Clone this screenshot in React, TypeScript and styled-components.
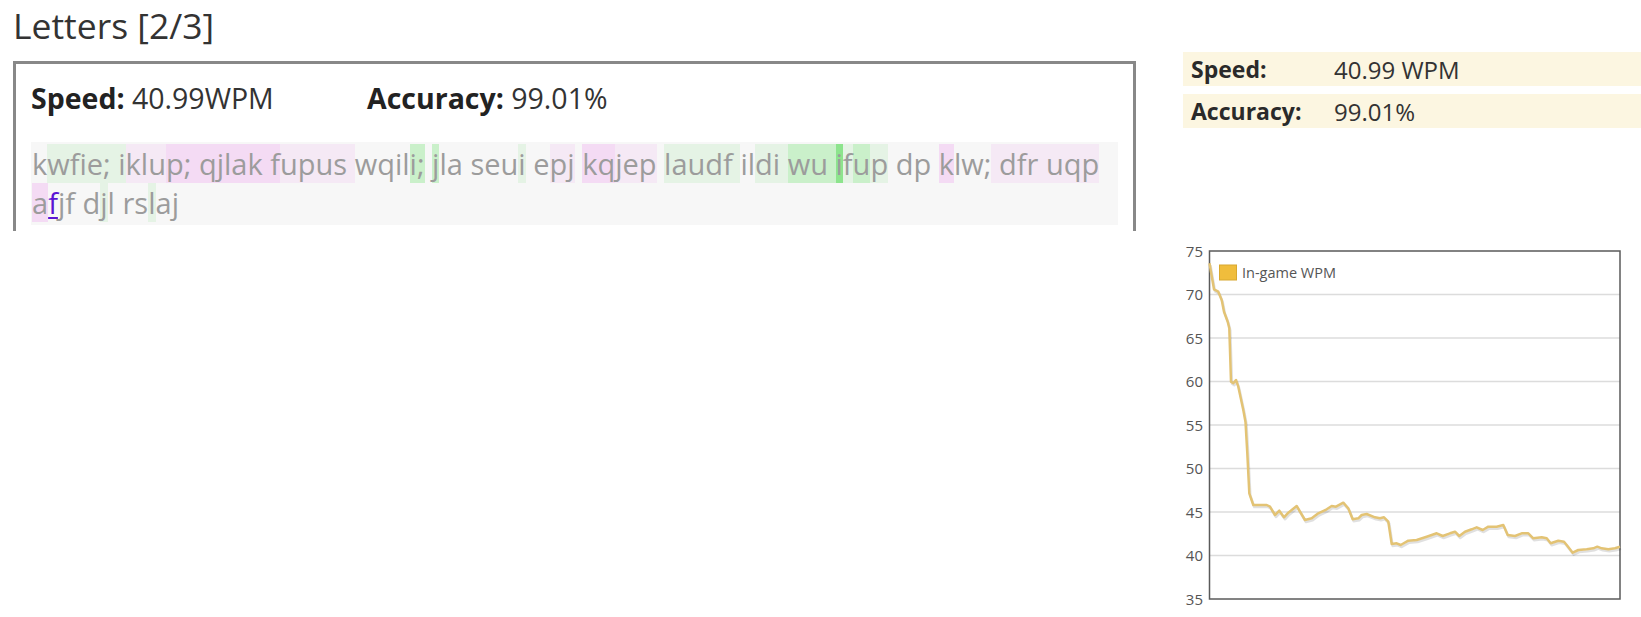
import React, { FC } from 'react';
import styled, { createGlobalStyle } from 'styled-components';

const GlobalStyle = createGlobalStyle`
  html, body {
    margin: 0;
    padding: 0;
    background: #fff;
  }
  body {
    font-family: 'Open Sans', 'Noto Sans', 'DejaVu Sans', sans-serif;
    color: #333;
  }
`;

const Page = styled.div`
  display: flex;
  width: 1641px;
  height: 617px;
  overflow: hidden;
`;

const LessonColumn = styled.div`
  width: 1160px;
  flex: none;
`;

const Title = styled.h1`
  margin: 0 0 12px 13px;
  padding-top: 2px;
  font-size: 35.5px;
  font-weight: 400;
  line-height: 47px;
  color: #333;
`;

const LessonBox = styled.div`
  box-sizing: border-box;
  margin-left: 13px;
  width: 1123px;
  border: 3px solid #888;
  border-bottom: none;
  padding: 15px 15px 6px 15px;
`;

const StatsRow = styled.div`
  display: flex;
  align-items: baseline;
  font-size: 28.5px;
  line-height: 38px;
  margin-bottom: 25px;
`;

const Stat = styled.div<{ $width?: number }>`
  width: ${(p) => (p.$width ? `${p.$width}px` : 'auto')};
  color: #333;
`;

const StatLabel = styled.b`
  font-weight: 700;
  color: #222;
`;

const TypingArea = styled.div`
  background: #f7f7f7;
  padding: 2px 0 3px 1px;
  font-size: 29px;
  line-height: 39px;
  color: #9c9c9c;
`;

type Tint = '.' | 'g' | 'G' | 'H' | 'p' | 'P' | 'C';

const tints: Record<Tint, string> = {
  '.': 'transparent',
  g: 'rgba(120, 220, 120, 0.14)',
  G: 'rgba(100, 225, 100, 0.3)',
  H: 'rgba(70, 215, 70, 0.6)',
  p: 'rgba(235, 130, 235, 0.11)',
  P: 'rgba(235, 130, 235, 0.24)',
  C: 'transparent',
};

const Char = styled.span<{ $tint: Tint }>`
  background: ${(p) => tints[p.$tint]};
  ${(p) =>
    p.$tint === 'C' &&
    `
    color: #5a14d4;
    text-decoration: underline;
    text-decoration-thickness: 2px;
    text-underline-offset: 3px;
  `}
`;

// each word with the tint of its letters (and trailing space)
const words: [string, string][] = [
  ['kwfie; ', '.gggggg'],
  ['iklup; ', 'gpppPPP'],
  ['qjlak ', 'PPPPPP'],
  ['fupus ', 'Pppppp'],
  ['wqili; ', '....GG.'],
  ['jla ', 'G...'],
  ['seui ', '...g.'],
  ['epj ', '.pp.'],
  ['kqjep ', 'PPppp.'],
  ['laudf ', 'gggggg'],
  ['ildi ', '..ggg'],
  ['wu ', 'GGG'],
  ['ifup ', 'HgGg.'],
  ['dp ', '...'],
  ['klw; ', 'P...p'],
  ['dfr ', 'pppp'],
  ['uqp ', 'ppp.'],
  ['afjf ', 'PC...'],
  ['djl ', '.g..'],
  ['rslaj', '..g..'],
];

const SidePanel = styled.div`
  flex: 1;
  padding-top: 52px;
`;

const StatTable = styled.div`
  margin-left: 23px;
  display: flex;
  flex-direction: column;
  gap: 8px;
`;

const TableRow = styled.div`
  display: flex;
  align-items: center;
  height: 34px;
  padding-left: 8px;
  background: #fcf6e1;
  font-size: 23px;
`;

const TableLabel = styled.div`
  width: 143px;
  font-weight: 700;
  color: #2a2a2a;
`;

const TableValue = styled.div`
  font-size: 24px;
  color: #333;
`;

const ChartWrap = styled.div`
  margin-top: 112px;
  width: 481px;
  height: 377px;
`;

const PLOT = { left: 49.5, right: 460, top: 11, bottom: 359 };
const yFor = (v: number) => PLOT.top + ((75 - v) / 40) * (PLOT.bottom - PLOT.top);

const linePoints: [number, number][] = [
  [49.5, 23.3], [54, 49.3], [58.3, 51.7], [61.7, 60], [64, 71.7], [67.7, 81.7],
  [69.3, 88.3], [71, 141.7], [73.3, 143.3], [76, 140], [78.3, 146.7], [83.3, 170],
  [85.5, 182], [87.3, 213.3], [89.3, 253.3], [93.3, 265], [106.7, 265], [110, 266.7],
  [115, 275], [119.3, 270.7], [124, 277.3], [128.3, 272.7], [136.7, 266], [145, 280],
  [151.7, 278.3], [158.3, 273.3], [166.7, 269.3], [171.7, 266], [176, 266.7],
  [183.3, 262.7], [188.3, 268.3], [192.7, 279.3], [198.3, 278.3], [201.7, 275],
  [206.7, 274], [215, 277.3], [220, 278.3], [224, 277.3], [228.3, 281.7], [231.7, 304],
  [236.7, 303.3], [240.7, 305], [248.3, 300.7], [256.7, 300], [266.7, 296.7],
  [276.7, 293.3], [282.7, 296], [290, 293.3], [295, 291.7], [299.3, 296], [305, 291.7],
  [311.7, 289.3], [316.7, 287.3], [322.7, 290], [328.3, 286.7], [336.7, 286.7],
  [343.3, 285], [347.7, 295], [355, 296], [361.7, 293.3], [368.3, 293.3], [373.3, 298.3],
  [381.7, 297.3], [386.7, 298.3], [390.7, 303.3], [398.3, 300.7], [404, 301.7],
  [406.7, 305], [412.7, 312.7], [418.3, 310], [426.7, 309.3], [433.3, 308.3],
  [437.3, 306.7], [441.7, 308.3], [448.3, 309.3], [455, 308.3], [460, 306.7],
];

const WpmChart: FC = () => {
  const ticks = [75, 70, 65, 60, 55, 50, 45, 40, 35];
  const d = linePoints.map(([x, y], i) => `${i ? 'L' : 'M'}${x} ${y}`).join(' ');
  return (
    <svg width={481} height={377} viewBox="0 0 481 377">
      {ticks.map((t) => (
        <g key={t}>
          {t !== 75 && t !== 35 && (
            <line x1={PLOT.left} x2={PLOT.right} y1={yFor(t)} y2={yFor(t)} stroke="#dcdcdc" strokeWidth={1.5} />
          )}
          <text
            x={43}
            y={yFor(t) + 5.5}
            textAnchor="end"
            fontSize={15}
            fill="#555"
            fontFamily="'Open Sans', sans-serif"
          >
            {t}
          </text>
        </g>
      ))}
      <rect
        x={PLOT.left}
        y={PLOT.top}
        width={PLOT.right - PLOT.left}
        height={PLOT.bottom - PLOT.top}
        fill="none"
        stroke="#5a5a5a"
        strokeWidth={1.5}
      />
      <path d={d} fill="none" stroke="rgba(0,0,0,0.12)" strokeWidth={2.5} transform="translate(1 2)" strokeLinejoin="round" />
      <path d={d} fill="none" stroke="#e3c374" strokeWidth={2.5} strokeLinejoin="round" />
      <rect x={59.5} y={25} width={17} height={15} fill="#f0bd3c" stroke="#d8a830" strokeWidth={1} />
      <text x={82} y={38} fontSize={14.5} fill="#555" fontFamily="'Open Sans', sans-serif">
        In-game WPM
      </text>
    </svg>
  );
};

const App: FC = () => (
  <Page>
    <GlobalStyle />
    <LessonColumn>
      <Title>Letters [2/3]</Title>
      <LessonBox>
        <StatsRow>
          <Stat $width={336}>
            <StatLabel>Speed:</StatLabel> 40.99WPM
          </Stat>
          <Stat>
            <StatLabel>Accuracy:</StatLabel> 99.01%
          </Stat>
        </StatsRow>
        <TypingArea>
          {words.map(([word, codes], wi) =>
            word.split('').map((ch, ci) => (
              <Char key={`${wi}-${ci}`} $tint={codes[ci] as Tint}>
                {ch}
              </Char>
            ))
          )}
        </TypingArea>
      </LessonBox>
    </LessonColumn>
    <SidePanel>
      <StatTable>
        <TableRow>
          <TableLabel>Speed:</TableLabel>
          <TableValue>40.99 WPM</TableValue>
        </TableRow>
        <TableRow>
          <TableLabel>Accuracy:</TableLabel>
          <TableValue>99.01%</TableValue>
        </TableRow>
      </StatTable>
      <ChartWrap>
        <WpmChart />
      </ChartWrap>
    </SidePanel>
  </Page>
);

export default App;
